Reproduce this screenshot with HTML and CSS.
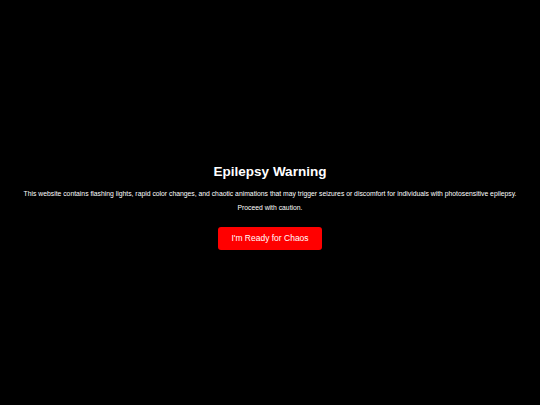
FILE: index.html
```html
<!DOCTYPE html>
<html>
<head>
<meta charset="utf-8">
<link rel="stylesheet" href="styles.css">
</head>
<body>
<div class="overlay">
  <h1 class="title">Epilepsy Warning</h1>
  <p class="text first">This website contains flashing lights, rapid color changes, and chaotic animations that may trigger seizures or discomfort for individuals with photosensitive epilepsy.</p>
  <p class="text">Proceed with caution.</p>
  <button class="btn">I'm Ready for Chaos</button>
</div>
</body>
</html>
```
FILE: styles.css
```css
html, body {
  margin: 0;
  padding: 0;
  background: #000;
  width: 540px;
  height: 405px;
  overflow: hidden;
  font-family: "Liberation Sans", Arial, sans-serif;
  color: #fff;
}
.overlay {
  box-sizing: border-box;
  height: 405px;
  padding-top: 9px;
  display: flex;
  flex-direction: column;
  align-items: center;
  justify-content: center;
  text-align: center;
}
.title {
  font-size: 13.5px;
  font-weight: bold;
  margin: 0 0 9px;
  line-height: 16px;
}
.text {
  font-size: 6.8px;
  line-height: 9px;
  margin: 0;
  white-space: nowrap;
}
.first {
  margin-bottom: 5px;
}
.btn {
  margin-top: 14.5px;
  background: #ff0000;
  color: #fff;
  border: none;
  border-radius: 3px;
  font-family: "Liberation Sans", Arial, sans-serif;
  font-size: 8.5px;
  line-height: 11px;
  padding: 6px 13px;
}
```
